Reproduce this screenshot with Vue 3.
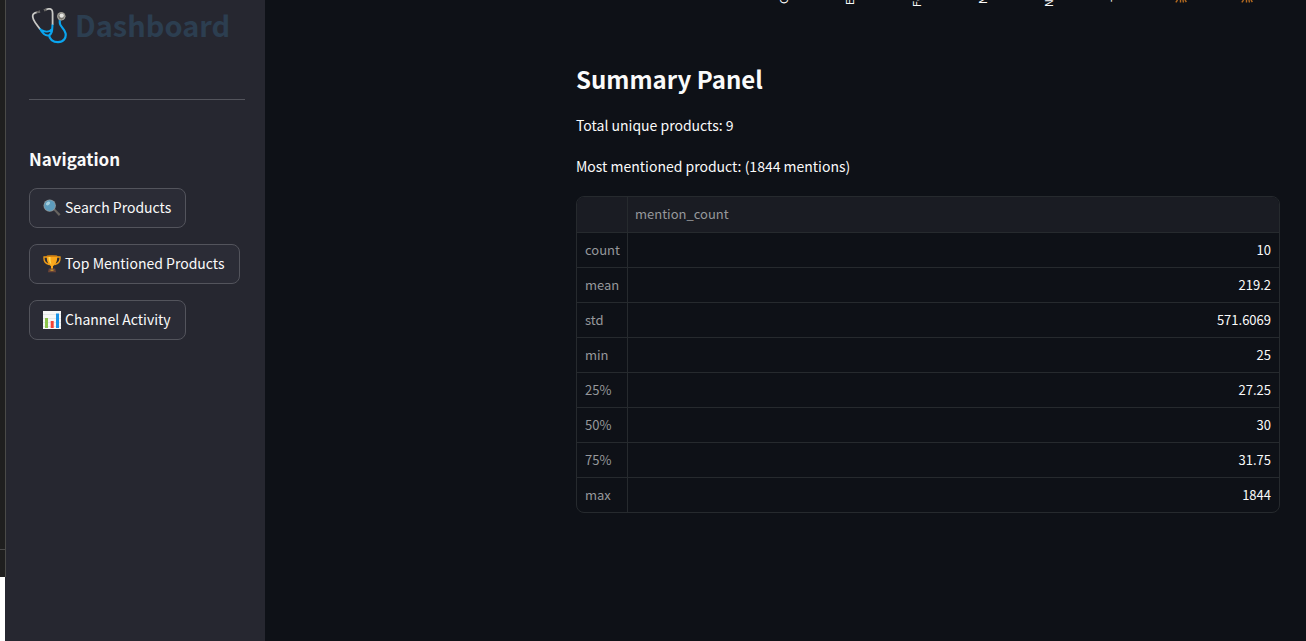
<script setup>
const ticks = [
  { text: 'C', reach: 4 },
  { text: 'E', reach: 5 },
  { text: 'Fe', reach: 7 },
  { text: 'N', reach: 4 },
  { text: 'N', reach: 7 },
  { text: 'T', reach: 2 },
  { burst: true, reach: 3 },
  { burst: true, reach: 3 },
]
const rows = [
  ['count', '10'],
  ['mean', '219.2'],
  ['std', '571.6069'],
  ['min', '25'],
  ['25%', '27.25'],
  ['50%', '30'],
  ['75%', '31.75'],
  ['max', '1844'],
]
</script>

<template>
  <div class="app">
    <div class="edge"><div class="edge-dark"><div class="edge-rule"></div></div></div>
    <aside class="sidebar">
      <h1 class="brand">
        <svg class="scope" viewBox="0 0 36 36" fill="none" aria-hidden="true">
          <path d="M9 3.5 4 4.8C1.6 5.6 1 8 2.5 11.5 4.3 15.5 7 18 9.3 21.5" stroke="#c9c9c6" stroke-width="1.8" />
          <path d="M13 2.2 17.5.9C20.5.5 21.6 2 21.6 5.5V17" stroke="#c9c9c6" stroke-width="1.8" />
          <path d="M5.5 4.3 9 3.5M13 2.4 15.5 1.7" stroke="#62605f" stroke-width="2.2" />
          <path d="M9 20.5C11 25 14.5 28.2 18 27.2 21.5 26 21.2 21.5 21.5 16.5M10.5 22.2C14 24.2 18.5 24.2 21 21" stroke="#0aa5ef" stroke-width="2" />
          <path d="M18.2 27C18 31 22 34.2 27 34.2 32.5 34.2 35.4 30 34.6 25.5 33.7 20.5 28.6 18.5 28.8 14.8V11" stroke="#0aa5ef" stroke-width="2.2" />
          <circle cx="30.3" cy="8.3" r="4.3" fill="#77756f" />
          <circle cx="30.3" cy="8.3" r="3.6" stroke="#a4a39c" stroke-width="1" />
          <circle cx="30.7" cy="7.6" r="2.2" fill="#e6e6e2" />
        </svg>
        <span>Dashboard</span>
      </h1>
      <hr class="divider" />
      <h3 class="nav-title">Navigation</h3>
      <nav class="nav">
        <button type="button" class="nav-btn">
          <svg class="icon" viewBox="0 0 18 18" aria-hidden="true">
            <path d="m10.5 11 1.4-1.3 5.6 5.6-1.6 1.8z" fill="#66635f" />
            <circle cx="6.7" cy="6.6" r="6.2" fill="#8c989d" />
            <circle cx="6.7" cy="6.6" r="5.3" fill="#5d9cbd" />
            <ellipse cx="5" cy="4.4" rx="2.3" ry="1.6" fill="#a4cfdf" transform="rotate(-38 5 4.4)" />
          </svg>
          <span>Search Products</span>
        </button>
        <button type="button" class="nav-btn">
          <svg class="icon" viewBox="0 0 18 18" aria-hidden="true">
            <path d="M4.2 2H1c-.4 4 1.6 6.7 5.2 7.5M13.8 2H17c.4 4-1.6 6.7-5.2 7.5" fill="none" stroke="#ef9b16" stroke-width="1.3" />
            <path d="M3.7.8h10.6c0 5.2-1.2 9-4.3 10.2v3H8v-3C4.9 9.8 3.7 6 3.7.8z" fill="#fba81c" />
            <path d="M5.5 2h2c0 3.2.2 5.5 1 7.6C6.5 8.2 5.6 5.5 5.5 2z" fill="#ffda57" />
            <ellipse cx="9" cy="1.2" rx="5.3" ry=".9" fill="#d5810f" />
            <path d="M5.8 13.5h6.4l.8 3.7H5z" fill="#6d4536" />
            <path d="M7.5 14.5h3v1.3h-3z" fill="#ca9a31" />
          </svg>
          <span>Top Mentioned Products</span>
        </button>
        <button type="button" class="nav-btn">
          <svg class="icon" viewBox="0 0 18 18" aria-hidden="true">
            <path d="M0 0h18v18H0z" fill="#f7f7f7" />
            <path d="M0 3.5h18M0 7.5h18M0 11.5h18M0 15.5h18" stroke="#d5dde0" stroke-width=".6" />
            <path d="M2 7h3v10H2z" fill="#8bc34a" />
            <path d="M7.7 10h3v7h-3z" fill="#f44336" />
            <path d="M13 2.5h3V17h-3z" fill="#1993e8" />
          </svg>
          <span>Channel Activity</span>
        </button>
      </nav>
    </aside>
    <main class="main">
      <div class="axis" aria-hidden="true">
        <div v-for="(t, i) in ticks" :key="i" class="tick">
          <svg v-if="t.burst" class="burst" viewBox="0 0 12 3">
            <path d="M2.5 0 .8 2.4M5.5 0V2.5M8 0l.4 2.5M10 0l1.4 2" stroke="#b36a20" stroke-width="1.4" fill="none" />
          </svg>
          <span v-else class="tick-text" :style="{ height: t.reach + 'px' }">{{ t.text }}</span>
        </div>
      </div>
      <section class="summary">
        <h2>Summary Panel</h2>
        <p>Total unique products: 9</p>
        <p>Most mentioned product: (1844 mentions)</p>
        <table>
          <thead>
            <tr><th class="key"></th><th scope="col">mention_count</th></tr>
          </thead>
          <tbody>
            <tr v-for="r in rows" :key="r[0]">
              <th class="key" scope="row">{{ r[0] }}</th>
              <td>{{ r[1] }}</td>
            </tr>
          </tbody>
        </table>
      </section>
    </main>
  </div>
</template>

<style>
body { background: #0e1117; }
</style>

<style scoped>
.app {
  display: flex;
  min-height: 100vh;
  color: #fafafa;
  background: #0e1117;
  font-family: "Noto Sans CJK SC", "Noto Sans", sans-serif;
  font-size: 14px;
  line-height: 24px;
}
.app * { box-sizing: border-box; }
h1, h2, h3, p { margin: 0; }
.edge { width: 6px; flex: none; background: linear-gradient(90deg, #fff 5px, #262730 5px); }
.edge-dark { height: 90vh; background: #1f1f1f; border-right: 1px solid #4a4a48; padding-top: 549px; }
.edge-rule { height: 1px; background: #4a4a4a; }
.sidebar { width: 259px; flex: none; background: #262730; padding: 0 20px 0 23px; }
.brand {
  display: flex;
  align-items: center;
  gap: 8px;
  height: 51px;
  color: #2c3e50;
  font-size: 29px;
  font-weight: 700;
  line-height: 48px;
}
.brand span { padding-bottom: 3px; }
.scope { width: 36px; height: 36px; margin-left: 2px; flex: none; }
.divider { margin: 48px 0 47px; border: 0; height: 1px; background: #53545c; }
.nav-title { font-size: 17px; line-height: 24px; font-weight: 600; }
.nav { display: flex; flex-direction: column; align-items: flex-start; gap: 16px; margin-top: 17px; }
.nav-btn {
  display: flex;
  align-items: center;
  gap: 4px;
  height: 40px;
  padding: 0 14px 0 13px;
  border: 1px solid #53545c;
  border-radius: 8px;
  background: #2b2c36;
  color: #fafafa;
  font: inherit;
  white-space: nowrap;
}
.nav-btn span { padding-bottom: 2px; }
.icon { width: 18px; height: 18px; flex: none; }
.main { flex: 1; min-width: 0; padding: 0 26px 0 311px; }
.axis {
  display: grid;
  grid-template-columns: repeat(8, 1fr);
  height: 7px;
  overflow: hidden;
  margin-left: 174px;
  font-size: 11px;
  line-height: 12px;
}
.tick { display: flex; justify-content: center; align-items: flex-start; min-width: 0; }
.tick-text { writing-mode: vertical-rl; transform: rotate(180deg); width: 12px; white-space: nowrap; }
.burst { width: 12px; height: 3px; }
.summary { padding-top: 54px; }
h2 { font-size: 24px; line-height: 35px; font-weight: 600; }
.summary p { margin: 17px 0; }
.summary p:last-of-type { margin-bottom: 18px; }
table {
  width: 100%;
  border: 1px solid #262a2e;
  border-radius: 8px;
  border-spacing: 0;
  overflow: hidden;
  font-size: 13px;
  line-height: 18px;
}
th, td { height: 35px; padding: 0 8px 1px; border-bottom: 1px solid #262a2e; }
th { text-align: left; font-weight: 400; color: #96989b; }
thead th { height: 36px; background: #1a1c23; padding-left: 7px; }
td { text-align: right; }
.key { width: 51px; padding-right: 7px; border-right: 1px solid #262a2e; }
tbody tr:last-child > * { height: 34px; border-bottom: 0; }
</style>
